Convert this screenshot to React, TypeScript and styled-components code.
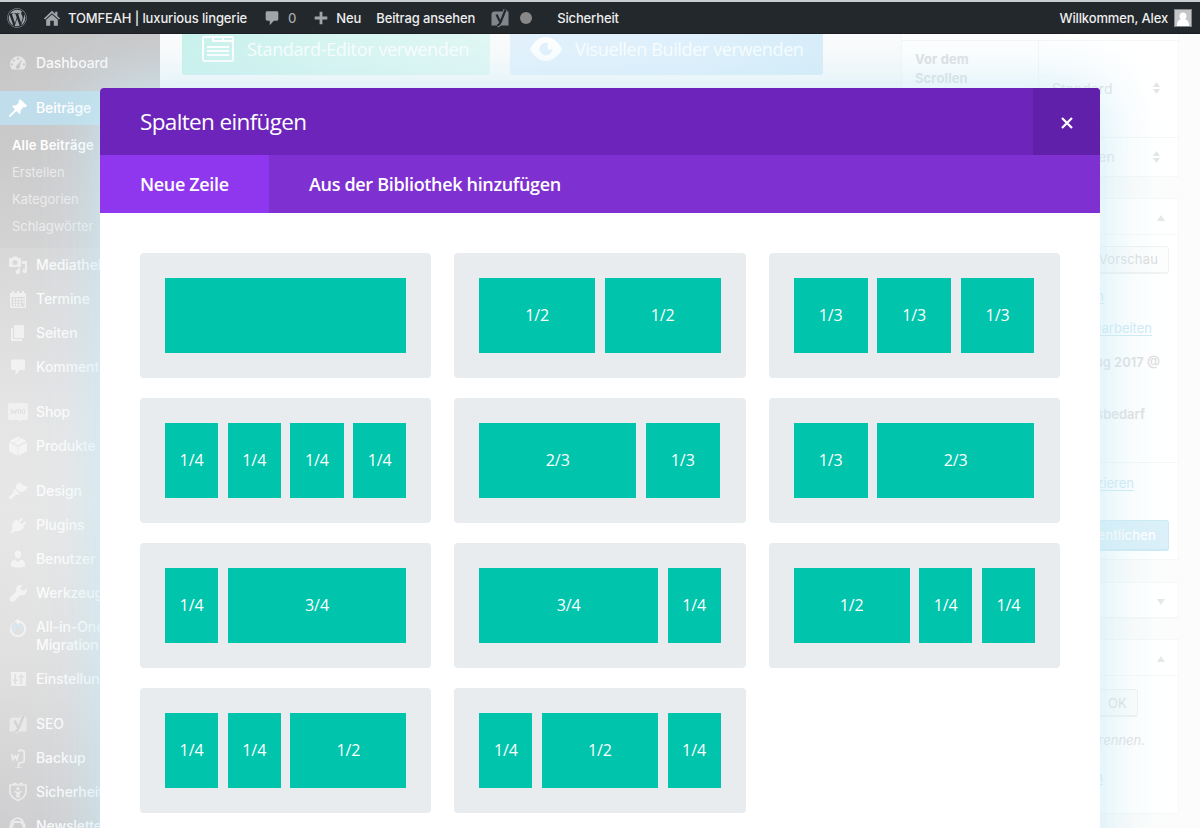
import React from "react";
import styled, { createGlobalStyle, css } from "styled-components";
import { FaWordpress } from "react-icons/fa";

const GlobalStyle = createGlobalStyle`
  * { box-sizing: border-box; }
  body { margin: 0; background: #fcfcfc; font-family: Inter, Roboto, sans-serif; }
  #root { height: 828px; overflow: hidden; }
`;

const Screen = styled.div`
  position: relative;
  width: 1200px;
  height: 828px;
  overflow: hidden;
  display: flex;
  flex-direction: column;
`;

/* ---------- admin bar ---------- */

const AdminBar = styled.header`
  position: relative;
  z-index: 2;
  flex: none;
  height: 34px;
  display: flex;
  align-items: center;
  padding: 1px 8px 0 7px;
  border-top: 2px solid #c9cdd0;
  border-bottom: 1px solid #1c1d22;
  background: #23282d;
  color: #eee;
  font-size: 13px;
  font-weight: 500;
  letter-spacing: -0.13px;
  white-space: nowrap;
`;

const BarItem = styled.div<{ $ml?: number; $muted?: boolean }>`
  display: flex;
  align-items: center;
  margin-left: ${(p) => p.$ml ?? 0}px;
  color: ${(p) => (p.$muted ? "#a0a5aa" : "#eee")};
`;

const BarIcon = styled.span`
  display: flex;
  color: #a0a5aa;
`;

const Push = styled.div`
  flex: 1;
`;

const Dot = styled.span`
  width: 12px;
  height: 12px;
  border-radius: 50%;
  background: #888;
  margin-left: 10px;
`;

const Avatar = styled.span`
  width: 18px;
  height: 18px;
  margin-left: 6px;
  border: 1px solid #82878c;
  background: #c5c5c5;
  display: flex;
`;

/* ---------- page behind the dialog ---------- */

const Page = styled.div`
  flex: 1;
  min-height: 0;
  display: flex;
`;

const Sidebar = styled.nav`
  flex: none;
  width: 160px;
  padding-top: 12px;
  background: linear-gradient(100deg, rgba(255, 255, 255, 0) 0%, rgba(255, 255, 255, 0.14) 100%),
    linear-gradient(#c5c5c6 0%, #cdcdce 14%, #dadadb 32%, #e4e4e5 48%, #e6e6e6 60%, #dfdfdf 78%, #cbcbcd 100%);
  overflow: hidden;
`;

const MenuRow = styled.div<{ $active?: boolean; $tall?: boolean }>`
  display: flex;
  align-items: ${(p) => (p.$tall ? "flex-start" : "center")};
  height: ${(p) => (p.$tall ? 52 : 34)}px;
  padding: ${(p) => (p.$tall ? "8px 0 0 8px" : "0 0 0 8px")};
  color: ${(p) => (p.$active ? "#fff" : "rgba(255,255,255,.9)")};
  font-size: 14px;
  font-weight: 500;
  line-height: 18px;
  letter-spacing: -0.1px;
  white-space: nowrap;
  ${(p) => p.$active && css`background: #bfddea;`}
`;

const MenuIcon = styled.span<{ $active?: boolean }>`
  flex: none;
  display: flex;
  width: 20px;
  height: 20px;
  margin-right: 8px;
  color: ${(p) => (p.$active ? "#fff" : "rgba(255,255,255,.56)")};
`;

const Gap = styled.div<{ $h?: number }>`
  height: ${(p) => p.$h ?? 11}px;
`;

const SubMenu = styled.div`
  height: 123px;
  padding: 7px 0 0 12px;
  background: rgba(120, 125, 130, 0.04);
  font-size: 13px;
`;

const SubItem = styled.div<{ $current?: boolean }>`
  height: 27px;
  line-height: 27px;
  letter-spacing: ${(p) => (p.$current ? 0.15 : -0.03)}px;
  color: ${(p) => (p.$current ? "#fff" : "rgba(255,255,255,.62)")};
  font-weight: ${(p) => (p.$current ? 600 : 400)};
`;

const Main = styled.main`
  width: 741px;
  padding-left: 22px;
  display: flex;
  align-items: flex-start;
  gap: 20px;
`;

const ModeButton = styled.div<{ $blue?: boolean }>`
  display: flex;
  align-items: center;
  width: ${(p) => (p.$blue ? 313 : 308)}px;
  height: 41px;
  padding: 0 0 12px 20px;
  gap: 13px;
  border-radius: 0 0 3px 3px;
  background: ${(p) =>
    p.$blue ? "linear-gradient(100deg,#e4f2fd,#e0f1fc 55%,#d8eefa)" : "linear-gradient(100deg,#c9f2ec,#d8f6f1 50%,#e2f8f4)"};
  color: rgba(255, 255, 255, 0.95);
  font-family: "Open Sans", sans-serif;
  font-size: 18px;
  letter-spacing: -0.37px;
  white-space: nowrap;
`;

const Rail = styled.aside`
  width: 278px;
  flex: none;
  font-size: 13px;
  color: #dfe0e1;
`;

const Panel = styled.section<{ $mt?: number; $h: number }>`
  height: ${(p) => p.$h}px;
  margin-top: ${(p) => p.$mt ?? 0}px;
  padding-top: ${(p) => (p.$mt ? 0 : 5)}px;
  background: #fff;
  border: 1px solid #f6f7f7;
  border-top-color: ${(p) => (p.$mt ? "#f6f7f7" : "#fff")};
`;

const OptionRow = styled.div<{ $h: number }>`
  display: flex;
  height: ${(p) => p.$h}px;
  border-top: 1px solid #f5f6f6;
`;

const OptionName = styled.div`
  width: 137px;
  padding: 9px 60px 0 13px;
  border-right: 1px solid #f6f7f7;
  font-weight: 700;
  line-height: 19px;
  letter-spacing: 0.1px;
  color: #dddfe0;
`;

const OptionValue = styled.div`
  flex: 1;
  display: flex;
  align-items: center;
  justify-content: space-between;
  padding: 0 18px 2px 13px;
  font-size: 14px;
  letter-spacing: 0.1px;
  color: #dfe3e4;
`;

const PanelHead = styled.div`
  display: flex;
  align-items: center;
  justify-content: flex-end;
  height: 36px;
  padding-right: 13px;
  border-bottom: 1px solid #f8f8f8;
  padding-top: 3px;
`;

const Line = styled.div<{ $h: number; $r: number; $link?: boolean; $bold?: boolean; $it?: boolean; $rule?: boolean }>`
  display: flex;
  align-items: center;
  justify-content: flex-end;
  height: ${(p) => p.$h}px;
  padding-right: ${(p) => p.$r}px;
  color: ${(p) => (p.$link ? "#cfeaf5" : "#dfe0e1")};
  text-decoration: ${(p) => (p.$link ? "underline" : "none")};
  font-weight: ${(p) => (p.$bold ? 600 : 400)};
  font-style: ${(p) => (p.$it ? "italic" : "normal")};
  border-top: ${(p) => (p.$rule ? "1px solid #f6f7f7" : "0")};
  text-underline-offset: 2px;
  white-space: nowrap;
`;

const Button = styled.span<{ $primary?: boolean }>`
  display: flex;
  align-items: center;
  height: ${(p) => (p.$primary ? 31 : 28)}px;
  padding: 0 ${(p) => (p.$primary ? 12 : 10)}px;
  border: 1px solid ${(p) => (p.$primary ? "#cdeaf4" : "#f1f2f2")};
  border-bottom-width: 2px;
  border-radius: 3px;
  background: ${(p) => (p.$primary ? "#dbf0f8" : "#fdfdfd")};
  color: ${(p) => (p.$primary ? "#fff" : "#dcdddd")};
  font-weight: ${(p) => (p.$primary ? 500 : 400)};
  letter-spacing: 0.15px;
`;

/* ---------- dialog ---------- */

const Dialog = styled.div`
  position: absolute;
  left: 100px;
  top: 88px;
  width: 1000px;
  height: 800px;
  background: #fff;
  border-radius: 4px 4px 0 0;
  box-shadow: 0 0 60px rgba(200, 234, 246, 0.96);
  font-family: "Open Sans", sans-serif;
  color: #fff;
`;

const DialogHead = styled.div`
  display: flex;
  justify-content: space-between;
  align-items: center;
  height: 67px;
  padding-left: 40px;
  border-radius: 4px 4px 0 0;
  background: #6c24ba;
  overflow: hidden;
`;

const Title = styled.h1`
  margin: 0;
  font-size: 22.5px;
  font-weight: 400;
  letter-spacing: -0.64px;
`;

const Close = styled.button`
  width: 67px;
  height: 67px;
  border: 0;
  padding: 2px 0 0;
  display: flex;
  align-items: center;
  justify-content: center;
  background: #6120aa;
  color: #fff;
`;

const Tabs = styled.div`
  display: flex;
  height: 58px;
  background: #7e30d1;
`;

const Tab = styled.div<{ $active?: boolean }>`
  display: flex;
  align-items: center;
  width: ${(p) => (p.$active ? "169px" : "auto")};
  padding-left: 40px;
  background: ${(p) => (p.$active ? "#8f37ee" : "transparent")};
  font-size: 18px;
  font-weight: 600;
  letter-spacing: -0.33px;
  white-space: nowrap;
`;

const Layouts = styled.div`
  display: grid;
  grid-template-columns: repeat(3, 1fr);
  gap: 20px 23px;
  padding: 40px;
`;

const LayoutCard = styled.div`
  display: flex;
  gap: 4%;
  height: 125px;
  padding: 25px;
  border-radius: 4px;
  background: #e8ecef;
`;

const Column = styled.div<{ $width: number }>`
  flex: none;
  width: ${(p) => p.$width}%;
  display: flex;
  align-items: center;
  justify-content: center;
  padding-bottom: 2px;
  background: #00c4ab;
  font-size: 16px;
  letter-spacing: -0.1px;
`;

const widths: Record<string, number> = {
  "1/1": 100,
  "1/2": 48,
  "1/3": 30.6,
  "2/3": 65,
  "1/4": 22,
  "3/4": 74,
};

const layouts: string[][] = [
  ["1/1"],
  ["1/2", "1/2"],
  ["1/3", "1/3", "1/3"],
  ["1/4", "1/4", "1/4", "1/4"],
  ["2/3", "1/3"],
  ["1/3", "2/3"],
  ["1/4", "3/4"],
  ["3/4", "1/4"],
  ["1/2", "1/4", "1/4"],
  ["1/4", "1/4", "1/2"],
  ["1/4", "1/2", "1/4"],
];

/* ---------- icons ---------- */

const Svg = ({ children, size = 20 }: { children: React.ReactNode; size?: number }) => (
  <svg width={size} height={size} viewBox="0 0 20 20" fill="currentColor">
    {children}
  </svg>
);

const SeoMark = ({ ink, body }: { ink: string; body: string }) => (
  <g fill="none">
    <path d="M4.500 3.500H18.500V17.500H1.500V6.500a3 3 0 0 1 3-3z" fill={body} />
    <path d="M6.500 6.500l3.400 7M15.600 1.500L10.500 14.300c-.8 2-1.500 2.900-3.300 3.300" stroke={body} strokeWidth="4" />
    <path d="M6.500 6.500l3.400 7M15.600 1.500L10.500 14.300c-.8 2-1.500 2.900-3.300 3.300" stroke={ink} strokeWidth="2.200" />
  </g>
);

const icons: Record<string, React.ReactNode> = {
  dashboard: (
    <path fillRule="evenodd" d="M4 16.500a8 8 0 1 1 12 0zM10 4.500a1.100 1.100 0 1 0 0 2.200 1.100 1.100 0 0 0 0-2.200zM5.800 6.300a1.100 1.100 0 1 0 0 2.200 1.100 1.100 0 0 0 0-2.200zM4 10.300a1.100 1.100 0 1 0 0 2.200 1.100 1.100 0 0 0 0-2.200zM16 10.300a1.100 1.100 0 1 0 0 2.200 1.100 1.100 0 0 0 0-2.200zM14 6l-4.800 6a2 2 0 1 0 2.600 1.400z" />
  ),
  pin: <path d="M10.400 3l1.800-1.800 7 6.500-1.900 1.800-1.700-.4-3.200 3.300c.5 1.400.2 2.700-.8 3.700l-3.300-3.200-5.500 5.500-2 .7.700-2 5.600-5.600-3-3.200c1-1 2.400-1.300 3.800-.8L11 4.600z" />,
  media: (
    <>
      <path fillRule="evenodd" d="M2 3h2l1-1.500h4L10 3h2a1 1 0 0 1 1 1v7a1 1 0 0 1-1 1H2a1 1 0 0 1-1-1V4a1 1 0 0 1 1-1zm5 2a2.500 2.500 0 1 0 0 5 2.500 2.500 0 0 0 0-5z" />
      <path d="M14 6h5v10a2.300 2.300 0 1 1-2-2.300V9h-3zM12 13v4a2.300 2.300 0 1 1-2-2.300V13z" />
    </>
  ),
  calendar: (
    <path fillRule="evenodd" d="M2 4h2V2h2v2h3V2h2v2h3V2h2v2h2v15H2zm1.500 4v9.500h13V8zM5 9.200h2v2H5zm3 0h2v2H8zm3 0h2v2h-2zm3 0h1.800v2H14zM5 12.200h2v2H5zm3 0h2v2H8zm3 0h2v2h-2zm3 0h1.800v2H14zM5 15h2v1.700H5zm3 0h2v1.700H8zm3 0h2v1.700h-2z" />
  ),
  pages: <path d="M6 2h10v13H6zM3 5h2v11h9v2H3z" />,
  comment: <path d="M4.500 2.500h11A1.500 1.500 0 0 1 17 4v7.500a1.500 1.500 0 0 1-1.500 1.500H12l-4.500 5V13h-3A1.500 1.500 0 0 1 3 11.500V4a1.500 1.500 0 0 1 1.500-1.500z" />,
  woo: (
    <>
      <path fillOpacity=".8" d="M2 1h16a2 2 0 0 1 2 2v13a2 2 0 0 1-2 2h-5l1 2.500L10 18H2a2 2 0 0 1-2-2V3a2 2 0 0 1 2-2z" />
      <path d="M3 7l1.200 5L6 8.500 7.500 12l1-5" fill="none" stroke="#dedede" />
      <ellipse cx="11.500" cy="9.500" rx="1.300" ry="2.200" fill="none" stroke="#dedede" />
      <ellipse cx="15.500" cy="9.500" rx="1.300" ry="2.200" fill="none" stroke="#dedede" />
    </>
  ),
  box: <path d="M10 .5l3 1.400L4.600 7 1.500 5zM14.200 2.600L18.500 5 10 9.500 6 7.600zM1 6.200l8.500 4.500v9L1 15zM19 6.200l-8.500 4.500v9L19 15zM5 7.200l8.500-5 .5.300-8.400 5z" />,
  brush: <path d="M9 3l2-1.500 2 1 3 2L20 6l-4.500 5-2-.6-1 1.200L7.300 7zM6.500 8l5 5-1.700 1-1.900-.7-3.700 3.800C3 18.300.2 18.300 1 16l4.800-4.500-.4-1.800z" />,
  plug: <path d="M13 3.300c.8-.8 2.200.4 1.300 1.400L11.800 7.300l2 2 2.700-2.500c1-.9 2.300.5 1.400 1.400L15.200 11l.9 1.200c-2 3.800-6 5-9.300 3.500L4.500 17.900c-1.100.9-2.600-.5-1.700-1.600L4.900 14C3.500 11 4.600 6.500 8.500 4.500l1.600 1.400z" />,
  user: <path d="M10 1.500c2 0 3.300 1.500 3.300 3.800C13.300 7.700 12 9.300 10 9.300S6.700 7.700 6.700 5.300C6.700 3 8 1.500 10 1.500zM3 17.500c0-4 1-6.700 4-7l3 2.800 3-2.800c3 .3 4.200 3 4.200 7-4 1.300-10 1.300-14.200 0z" />,
  wrench: <path d="M16.500 7.500l2.200-2.300c.8 2.700-.2 5-2 6.200-1.400.9-3 1-4.300.6L6.300 18.200c-2.500 2-6-1.200-4.200-3.800L8.400 8.300c-.6-2-.2-4 1.300-5.300C11.200 1.600 13 1.300 15 2l-2.600 2.400.4 2.700z" />,
  migrate: (
    <>
      <path d="M10 3.500a7.300 7.300 0 1 1-7.300 7.300" fill="none" stroke="currentColor" strokeWidth="2" />
      <path d="M6.500 3.500L11 .5v6z" />
      <path d="M2.700 10.800A7.300 7.300 0 0 1 5.500 5" fill="none" stroke="currentColor" strokeWidth="1" />
      <path d="M7 13.500a3.800 3.800 0 1 1 6.500-1.500" fill="none" stroke="#d3e9f7" strokeWidth="2" />
    </>
  ),
  settings: <path fillRule="evenodd" d="M3 3h15v14H3zm3.500 2v5.500H5V12h1.500v3H8v-3h1.700v-1.500H8V5zm6 0v2H11v1.500h1.500V15H14V8.500h1.800V7H14V5z" />,
  yoast: <SeoMark ink="#d2d2d3" body="#e9e9e9" />,
  backup: (
    <path
      d="M3.800 6l.9 5.600L7.300 8l1.600 3.600L10.300 6M11 4V2.300h3a2.200 2.200 0 0 1 2.200 2.200V12a2.500 2.500 0 0 1-2.500 2.500h-1c-1.500 0-2.200.7-2.200 2V20M7 20.300h7"
      fill="none"
      stroke="currentColor"
      strokeWidth="1.700"
    />
  ),
  shield: (
    <>
      <path d="M2 3h4V1.500h2V3h4V1.500h2V3h4v6c0 5-3 7.500-8 9.500C5 16.500 2 14 2 9z" fill="none" stroke="currentColor" strokeWidth="1.700" />
      <circle cx="10" cy="6.800" r="1.700" />
      <path d="M6.500 8.500L10 10l3.500-1.500v1.800L11.700 11v4.500H8.300V11l-1.800-.7z" />
    </>
  ),
  mail: (
    <path d="M6 3.500a5.500 5.500 0 0 1 9 3 5.500 5.500 0 0 1 0 8 5.500 5.500 0 0 1-9 2 5.500 5.500 0 0 1-3-8A5.500 5.500 0 0 1 6 3.500zM6 6h7l3 5-4 6H6l-2-6z" fill="none" stroke="currentColor" strokeWidth="1.800" />
  ),
};

const Entry = ({ icon, text, active, tall }: { icon: string; text: React.ReactNode; active?: boolean; tall?: boolean }) => (
  <MenuRow $active={active} $tall={tall}>
    <MenuIcon $active={active}>
      <Svg>{icons[icon]}</Svg>
    </MenuIcon>
    <span>{text}</span>
  </MenuRow>
);

const Triangle = ({ down }: { down?: boolean }) => (
  <svg width="8" height="6" viewBox="0 0 8 6" fill="#e6e7e7">
    <path d={down ? "M0 0h8L4 6z" : "M0 6h8L4 0z"} />
  </svg>
);

const Sorter = () => (
  <svg width="7" height="12" viewBox="0 0 7 12" fill="#e3e6e6">
    <path d="M0 5h7L3.500 0zM0 7h7l-3.500 5z" />
  </svg>
);

export default function App() {
  return (
    <Screen>
      <GlobalStyle />
      <AdminBar>
        <BarIcon><FaWordpress size={20} /></BarIcon>
        <BarItem $ml={16}>
          <BarIcon>
            <Svg size={18}>
              <path d="M10 2L1 10.500l1.300 1.300L10 4.600l7.700 7.200 1.300-1.300-3-2.800V3h-2.500v2.300zM3.500 12L10 6l6.500 6v6.500H12V13H8v5.500H3.500z" />
            </Svg>
          </BarIcon>
        </BarItem>
        <BarItem $ml={7}>TOMFEAH | luxurious lingerie</BarItem>
        <BarItem $ml={16}><BarIcon><Svg size={18}>{icons.comment}</Svg></BarIcon></BarItem>
        <BarItem $ml={7} $muted>0</BarItem>
        <BarItem $ml={18}>
          <BarIcon><Svg size={14}><path d="M8 1h4v7h7v4h-7v7H8v-7H1V8h7z" /></Svg></BarIcon>
        </BarItem>
        <BarItem $ml={8}>Neu</BarItem>
        <BarItem $ml={15}>Beitrag ansehen</BarItem>
        <BarItem $ml={15}><BarIcon><Svg><SeoMark ink="#23282d" body="#82878c" /></Svg></BarIcon></BarItem>
        <Dot />
        <BarItem $ml={25}>Sicherheit</BarItem>
        <Push />
        <BarItem>Willkommen, Alex</BarItem>
        <Avatar>
          <svg width="16" height="16" viewBox="0 0 16 16" fill="#fff">
            <path d="M8 2.500c2 0 3.500 1.500 3.500 3.500 0 1.500-.6 2.500-1.500 3.200 3 .8 4 2.800 4 6.800H2c0-4 1-6 4-6.800C5.100 8.500 4.500 7.500 4.500 6 4.500 4 6 2.500 8 2.500z" />
          </svg>
        </Avatar>
      </AdminBar>

      <Page>
        <Sidebar>
          <Entry icon="dashboard" text="Dashboard" />
          <Gap />
          <Entry icon="pin" text="Beiträge" active />
          <SubMenu>
            <SubItem $current>Alle Beiträge</SubItem>
            <SubItem>Erstellen</SubItem>
            <SubItem>Kategorien</SubItem>
            <SubItem>Schlagwörter</SubItem>
          </SubMenu>
          <Entry icon="media" text="Mediathek" />
          <Entry icon="calendar" text="Termine" />
          <Entry icon="pages" text="Seiten" />
          <Entry icon="comment" text="Kommentare" />
          <Gap />
          <Entry icon="woo" text="Shop" />
          <Entry icon="box" text="Produkte" />
          <Gap />
          <Entry icon="brush" text="Design" />
          <Entry icon="plug" text="Plugins" />
          <Entry icon="user" text="Benutzer" />
          <Entry icon="wrench" text="Werkzeuge" />
          <Entry icon="migrate" text={<>All-in-One<br />Migration</>} tall />
          <Entry icon="settings" text="Einstellungen" />
          <Gap />
          <Entry icon="yoast" text="SEO" />
          <Entry icon="backup" text="Backup" />
          <Entry icon="shield" text="Sicherheit" />
          <Entry icon="mail" text="Newsletter" />
        </Sidebar>

        <Main>
          <ModeButton>
            <svg width="32" height="26" viewBox="0 0 32 26" fill="none" stroke="#fff" strokeWidth="2">
              <rect x="1" y="1" width="30" height="24" rx="1.500" />
              <path d="M11 1v4h20M21 1v4M5 11h22M5 15h22M5 19h22" />
            </svg>
            Standard-Editor verwenden
          </ModeButton>
          <ModeButton $blue>
            <svg width="32" height="24" viewBox="0 0 32 24" fill="#fff">
              <path fillRule="evenodd" d="M0 12C4 4 10 0 16 0s12 4 16 12c-4 8-10 12-16 12S4 20 0 12zM16 5.500a6.500 6.500 0 1 0 6.500 6.500c-1.200 1.500-5.500 1-5-2.500.2-2 .8-3 .8-3.600z" />
            </svg>
            Visuellen Builder verwenden
          </ModeButton>
        </Main>

        <Rail>
          <Panel $h={143}>
            <OptionRow $h={97}>
              <OptionName>Vor dem Scrollen</OptionName>
              <OptionValue>Standard<Sorter /></OptionValue>
            </OptionRow>
            <OptionRow $h={40}>
              <OptionName />
              <OptionValue>Anzeigen<Sorter /></OptionValue>
            </OptionRow>
          </Panel>
          <Panel $mt={21} $h={362}>
            <PanelHead><Triangle /></PanelHead>
            <Line $h={49} $r={9}><Button>Vorschau</Button></Line>
            <Line $h={24} $r={74} $link>Bearbeiten</Line>
            <Line $h={39} $r={26} $link>Bearbeiten</Line>
            <Line $h={29} $r={18} $bold>28. Aug 2017 @</Line>
            <Line $h={75} $r={33} $bold>Verbesserungsbedarf</Line>
            <Gap />
            <Line $h={40} $r={44} $link $rule>Duplizieren</Line>
            <Gap $h={5} />
            <Line $h={56} $r={9}><Button $primary>Veröffentlichen</Button></Line>
          </Panel>
          <Panel $mt={22} $h={36}><PanelHead><Triangle down /></PanelHead></Panel>
          <Panel $mt={21} $h={175}>
            <PanelHead><Triangle /></PanelHead>
            <Line $h={54} $r={40}><Button>OK</Button></Line>
            <Line $h={19} $r={33} $it>Schlagwörter durch Kommas trennen.</Line>
            <Line $h={56} $r={75} $link>Schlagwörtern</Line>
          </Panel>
        </Rail>
      </Page>

      <Dialog>
        <DialogHead>
          <Title>Spalten einfügen</Title>
          <Close aria-label="Schließen">
            <svg width="12" height="12" viewBox="0 0 12 12" stroke="#fff" strokeWidth="2.200">
              <path d="M1 1l10 10M11 1L1 11" />
            </svg>
          </Close>
        </DialogHead>
        <Tabs>
          <Tab $active>Neue Zeile</Tab>
          <Tab>Aus der Bibliothek hinzufügen</Tab>
        </Tabs>
        <Layouts>
          {layouts.map((cols, i) => (
            <LayoutCard key={i}>
              {cols.map((c, j) => (
                <Column key={j} $width={widths[c]}>{c === "1/1" ? "" : c}</Column>
              ))}
            </LayoutCard>
          ))}
        </Layouts>
      </Dialog>
    </Screen>
  );
}
